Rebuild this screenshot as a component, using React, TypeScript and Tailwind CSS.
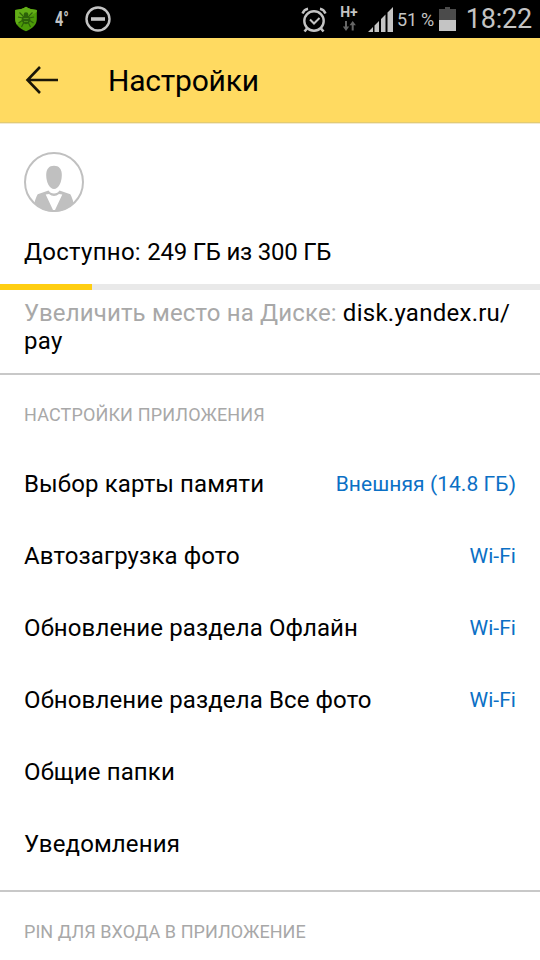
/**
 * Settings screen of the Disk app
 */
import React from 'react';

interface SettingsRowProps {
  label: string;
  value?: string;
}

const rows: SettingsRowProps[] = [
  { label: 'Выбор карты памяти', value: 'Внешняя (14.8 ГБ)' },
  { label: 'Автозагрузка фото', value: 'Wi-Fi' },
  { label: 'Обновление раздела Офлайн', value: 'Wi-Fi' },
  { label: 'Обновление раздела Все фото', value: 'Wi-Fi' },
  { label: 'Общие папки' },
  { label: 'Уведомления' },
];

function ShieldIcon() {
  return (
    <svg width="24" height="26" viewBox="0 0 24 26" fill="none">
      <path d="M12 .8C9.500 2.700 5.500 3.800 1.200 3.900V13c0 5.700 4.300 9.600 10.800 12.200C18.500 22.600 22.800 18.700 22.800 13V3.900C18.500 3.800 14.500 2.700 12 .8z" fill="#4c9a08" />
      <path d="M12 .8C9.500 2.700 5.500 3.800 1.200 3.900V13c0 2 .5 3.800 1.500 5.400L22.800 6V3.900C18.500 3.800 14.500 2.700 12 .8z" fill="#62ad17" />
      <path d="M9 10 5.500 6.500M9 12 4 11M9 14l-4.500 3M10 16l-2.500 5M15 10l3.500-3.500M15 12l5-1M15 14l4.500 3M14 16l2.500 5" stroke="#2d620a" strokeWidth="1.200" />
      <ellipse cx="12" cy="13.500" rx="4.300" ry="4.700" fill="#2d620a" />
      <circle cx="12" cy="8.500" r="2.300" fill="#2d620a" />
      <path d="M9.500 12.500h5M10 15.500h4" stroke="#4d8f14" />
    </svg>
  );
}

function AlarmIcon() {
  return (
    <svg width="26" height="26" viewBox="0 0 26 26" fill="none" stroke="#c4c4c4">
      <circle cx="13" cy="14" r="9.700" strokeWidth="2.400" />
      <path d="m9 12.500 4 4 5.500-5.500" strokeWidth="2" />
      <path d="M1.500 6.500C2.500 4 4.500 2.300 7 1.800M24.500 6.500C23.500 4 21.500 2.300 19 1.800" strokeWidth="2.400" />
      <path d="m6 21.500-2.500 3M20 21.500l2.500 3" strokeWidth="2.600" />
    </svg>
  );
}

function DataArrowsIcon() {
  return (
    <svg width="13" height="10" viewBox="0 0 13 10" fill="#666">
      <path d="M2 0h2v5.500h2.200L3 10-.2 5.500H2zM8.700 9.500V4.300H6.500L9.700 0l3.200 4.300h-2.200v5.200z" />
    </svg>
  );
}

function SignalIcon() {
  return (
    <svg width="25" height="25" viewBox="0 0 25 25" fill="#c4c4c4">
      <path d="M0 25l5-5v5zM6.500 25v-6.500l4.500-4.500v11zM13 25V12l4.500-4.500V25zM19.500 25V5.500L25 0v25z" />
    </svg>
  );
}

function BatteryIcon() {
  return (
    <svg width="17" height="24" viewBox="0 0 17 24">
      <path d="M6 0h5v2h6v11H0V2h6z" fill="#4b4b4b" />
      <path d="M0 13h17v11H0z" fill="#c4c4c4" />
    </svg>
  );
}

function StatusBar() {
  return (
    <div className="flex h-[38px] items-center bg-black pl-3.5 pr-2 text-[#c4c4c4]">
      <ShieldIcon />
      <span className="ml-[17px] w-[15px] origin-left scale-x-[0.72] text-[20px] font-bold leading-none">4°</span>
      <svg className="ml-[15px]" width="26" height="26" viewBox="0 0 26 26" fill="none" stroke="#c4c4c4">
        <circle cx="13" cy="13" r="11.500" strokeWidth="2.400" />
        <path d="M6 13h14" strokeWidth="3.600" />
      </svg>
      <div className="ml-auto flex items-center">
        <div className="pt-0.5"><AlarmIcon /></div>
        <div className="ml-[13px] flex w-[18px] flex-col items-center gap-[3px]">
          <span className="text-[14px] font-bold leading-[11px]">H+</span>
          <DataArrowsIcon />
        </div>
        <div className="ml-2.5"><SignalIcon /></div>
        <span className="ml-1 w-[38px] whitespace-nowrap pt-px text-[18px] leading-none tracking-[-0.2px]">51 %</span>
        <div className="ml-1"><BatteryIcon /></div>
        <span className="ml-[9px] w-[67px] text-right text-[27px] leading-none tracking-[-0.2px]">18:22</span>
      </div>
    </div>
  );
}

function Header() {
  return (
    <header>
      <div className="flex h-[84px] items-center bg-[#ffda61] pl-[25px]">
        <svg width="34" height="28" viewBox="0 0 34 28" fill="none" stroke="#1a1608" strokeWidth="2.600">
          <path d="M15 1 2.500 14 15 27M2 14h31" />
        </svg>
        <h1 className="ml-[49px] pt-0.5 text-[30px] leading-9 tracking-[-0.2px]">Настройки</h1>
      </div>
      <div className="h-px bg-[#e3cb72]" />
      <div className="h-px bg-[#f3ead0]" />
    </header>
  );
}

function Avatar() {
  return (
    <svg width="60" height="60" viewBox="0 0 60 60">
      <circle cx="30" cy="30" r="29" fill="none" stroke="#c0c0c0" strokeWidth="2" />
      <path d="M30 13.700c5 0 7.800 3.300 7.800 9.300 0 7.500-3.300 14-7.800 14s-7.800-6.500-7.800-14c0-6 2.800-9.300 7.800-9.300z" fill="#c0c0c0" />
      <path d="M24.500 38.500c1.200 2 3 3 5.500 3s4.300-1 5.500-3l10.800 3.800c1.500 2.700 2.500 5.500 3.200 8.500C44.500 56.500 38 60 30 60S15.500 56.500 10.500 50.800c.7-3 1.700-5.800 3.200-8.500z" fill="#c0c0c0" />
      <path d="M21.700 42.500 25 42c3 2.600 7 2.600 10 0l3.300.5L31 58h-2z" fill="#fff" />
    </svg>
  );
}

function SettingsRow({ label, value }: SettingsRowProps) {
  return (
    <div className="flex h-[72px] items-center justify-between text-2xl">
      <span className="tracking-[0.12px]">{label}</span>
      {value && <span className="text-[21px] tracking-[0.06px] text-[#0b70c5]">{value}</span>}
    </div>
  );
}

export default function App() {
  return (
    <div className="h-[960px] w-[540px] overflow-hidden bg-white font-['Roboto',sans-serif] text-black">
      <StatusBar />
      <Header />
      <section className="border-b-2 border-[#c8c8c8]">
        <div className="px-6 pt-7">
          <Avatar />
          <p className="mt-6 h-12 text-2xl tracking-[-0.23px]">
            <span className="tracking-[0.27px]">Доступно: </span>249 ГБ из 300 ГБ
          </p>
        </div>
        <div className="h-1.5 bg-[#e9e9e9]">
          <div className="h-full w-[92px] bg-[#ffce12]" />
        </div>
        <p className="h-[83px] px-6 pt-[9px] text-2xl leading-7 tracking-[0.16px] text-[#a8a8a8]">
          Увеличить место на Диске: <span className="tracking-[0.26px] text-black">disk.yandex.ru/<br />pay</span>
        </p>
      </section>
      <section className="h-[517px] border-b-2 border-[#c8c8c8] px-6">
        <h2 className="flex h-[73px] items-center pt-1.5 text-lg tracking-[0.14px] text-[#a8a8a8]">НАСТРОЙКИ ПРИЛОЖЕНИЯ</h2>
        {rows.map(row => (
          <SettingsRow key={row.label} {...row} />
        ))}
      </section>
      <section className="px-6">
        <h2 className="flex h-[73px] items-center pt-1.5 text-lg tracking-[0.05px] text-[#a8a8a8]">PIN ДЛЯ ВХОДА В ПРИЛОЖЕНИЕ</h2>
      </section>
    </div>
  );
}
